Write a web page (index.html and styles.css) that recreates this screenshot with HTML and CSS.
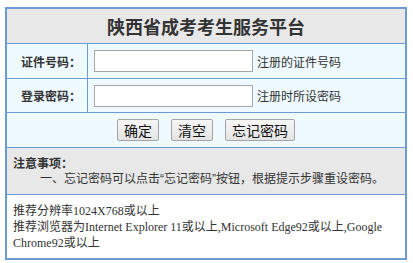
FILE: index.html
```html
<!DOCTYPE html>
<html lang="zh-CN">
<head>
<meta charset="utf-8">
<title>陕西省成考考生服务平台</title>
<link rel="stylesheet" href="styles.css">
</head>
<body>
<div class="panel">
  <div class="header">陕西省成考考生服务平台</div>
  <div class="row row-a">
    <div class="label">证件号码：</div>
    <div class="field"><input class="input" type="text"><span class="hint">注册的证件号码</span></div>
  </div>
  <div class="row row-b">
    <div class="label">登录密码：</div>
    <div class="field"><input class="input" type="password"><span class="hint">注册时所设密码</span></div>
  </div>
  <div class="actions">
    <button class="btn" type="button">确定</button>
    <button class="btn" type="button">清空</button>
    <button class="btn" type="button">忘记密码</button>
  </div>
  <div class="notice">
    <div class="notice-title">注意事项：</div>
    <div class="notice-item">一、忘记密码可以点击“忘记密码”按钮，根据提示步骤重设密码。</div>
  </div>
  <div class="tips">
    推荐分辨率1024X768或以上<br>
    推荐浏览器为Internet Explorer 11或以上,Microsoft Edge92或以上,Google Chrome92或以上
  </div>
</div>
</body>
</html>
```
FILE: styles.css
```css
* { box-sizing: border-box; }
body {
  margin: 0;
  background: #fff;
  font-family: "Noto Sans CJK SC", "Noto Sans", sans-serif;
  color: #333;
}
.panel {
  width: 402px;
  margin: 7px 0 0 5px;
  border: 2px solid #6b9bd2;
}
.header {
  height: 34px;
  background: #e8e8e8;
  display: flex;
  align-items: center;
  justify-content: center;
  font-size: 18px;
  font-weight: bold;
  color: #333;
}
.row {
  display: flex;
  border-top: 1px solid #6b9bd2;
  background: #eefaff;
}
.row-a { height: 35px; }
.row-b { height: 34px; }
.label {
  width: 81px;
  border-right: 1px solid #6b9bd2;
  display: flex;
  align-items: center;
  justify-content: flex-end;
  padding-right: 6px;
  font-size: 12px;
  font-weight: bold;
  color: #333;
}
.field {
  display: flex;
  align-items: center;
  padding-left: 6px;
}
.input {
  width: 159px;
  height: 22px;
  margin: 0;
  border: 1px solid #a6a6a6;
  background: #fff;
  padding: 0 2px;
}
.hint {
  margin-left: 4px;
  font-size: 12px;
  color: #333;
}
.actions {
  height: 35px;
  border-top: 1px solid #6b9bd2;
  background: #eefaff;
  display: flex;
  align-items: center;
  justify-content: center;
  gap: 12px;
}
.btn {
  height: 22px;
  padding: 0 6px;
  margin: 0;
  border: 1px solid #a3a3a3;
  border-radius: 2px;
  background: linear-gradient(#f6f6f6, #e4e4e4);
  font-family: "Noto Sans CJK SC", sans-serif;
  font-size: 14px;
  line-height: 20px;
  color: #111;
}
.notice {
  height: 47px;
  border-top: 1px solid #6b9bd2;
  background: #e8e8e8;
  padding: 6px 6px 0;
  font-size: 12px;
  line-height: 17px;
  font-family: "Liberation Sans", "Noto Sans CJK SC", sans-serif;
}
.notice-title {
  font-weight: bold;
  font-family: "Noto Sans CJK SC", sans-serif;
}
.notice-item {
  padding-left: 27px;
}
.tips {
  height: 64px;
  border-top: 1px solid #6b9bd2;
  background: #fff;
  padding: 8px 6px 0;
  font-family: "Liberation Serif", "Noto Sans CJK SC", serif;
  font-size: 12px;
  line-height: 16px;
  color: #333;
}
```
